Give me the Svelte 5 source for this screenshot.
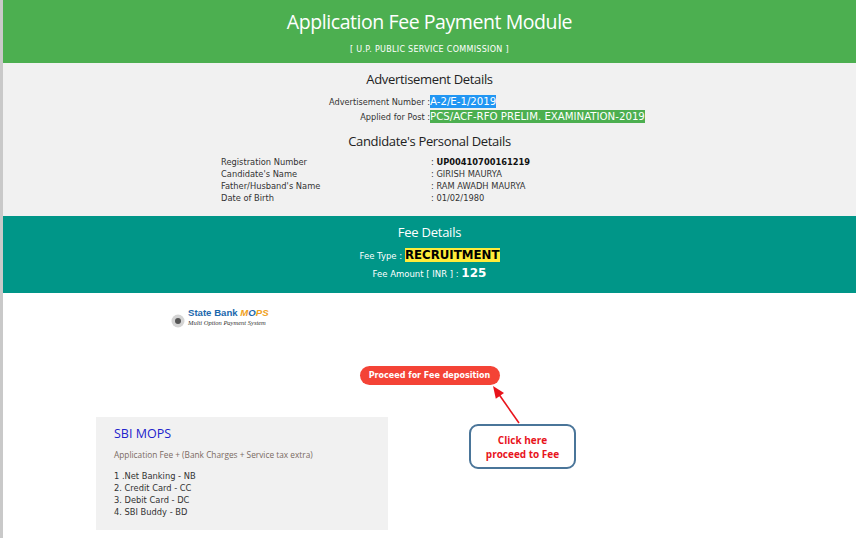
<script lang="ts">
const personal = [
  { label: "Registration Number", value: "UP00410700161219", strong: true },
  { label: "Candidate's Name", value: "GIRISH MAURYA" },
  { label: "Father/Husband's Name", value: "RAM AWADH MAURYA" },
  { label: "Date of Birth", value: "01/02/1980" },
];

const modes = ["1 .Net Banking - NB", "2. Credit Card - CC", "3. Debit Card - DC", "4. SBI Buddy - BD"];
</script>

<div class="page">
  <header class="banner">
    <h1>Application Fee Payment Module</h1>
    <p>[ U.P. PUBLIC SERVICE COMMISSION ]</p>
  </header>

  <section class="details">
    <h2>Advertisement Details</h2>
    <div class="ad-row">
      <span class="ad-label">Advertisement Number :</span><span class="ad-value blue">A-2/E-1/2019</span>
    </div>
    <div class="ad-row">
      <span class="ad-label">Applied for Post :</span><span class="ad-value green">PCS/ACF-RFO PRELIM. EXAMINATION-2019</span>
    </div>
    <h2 class="second">Candidate's Personal Details</h2>
    <div class="personal">
      {#each personal as row}
        <span>{row.label}</span>
        <span>: <b class:reg={row.strong}>{row.value}</b></span>
      {/each}
    </div>
  </section>

  <section class="fee">
    <h3>Fee Details</h3>
    <div class="fee-type">Fee Type : <mark>RECRUITMENT</mark></div>
    <div class="fee-amount">Fee Amount [ INR ] : <b>125</b></div>
  </section>

  <section class="payment">
    <div class="logo">
      <svg width="14" height="14" viewBox="0 0 14 14">
        <circle cx="7" cy="7" r="6.5" fill="#d4d4d4" />
        <circle cx="7" cy="7" r="3" fill="#555" />
      </svg>
      <div class="logo-text">
        <div class="logo-name">State Bank <em>M<i>O</i>PS</em></div>
        <div class="logo-sub">Multi Option Payment System</div>
      </div>
    </div>

    <div class="proceed-row">
      <button class="proceed">Proceed for Fee deposition</button>
    </div>

    <div class="card">
      <h4>SBI MOPS</h4>
      <p class="note">Application Fee + (Bank Charges + Service tax extra)</p>
      <ul>
        {#each modes as mode}
          <li>{mode}</li>
        {/each}
      </ul>
    </div>

    <svg class="arrow" width="36" height="44" viewBox="0 0 36 44">
      <line x1="31" y1="40" x2="10" y2="10" stroke="#e8141c" stroke-width="1.6" />
      <path d="M5 3 L16 9.9 L7.8 15.7 Z" fill="#e8141c" />
    </svg>
    <div class="callout">Click here<br />proceed to Fee</div>
  </section>
</div>

<style>
  :global(body) {
    margin: 0;
    background: #fff;
  }

  .page {
    position: relative;
    width: 856px;
    height: 538px;
    overflow: hidden;
    box-sizing: border-box;
    border-left: 3px solid #c9c9c9;
    font-family: "DejaVu Sans", Verdana, sans-serif;
    font-size: 8.3px;
    color: #333;
  }

  .banner {
    height: 63px;
    background: #4caf50;
    color: #fff;
    text-align: center;
    overflow: hidden;
  }

  h1 {
    margin: 8px 0 0;
    font: 400 19.5px/28px "Open Sans", sans-serif;
    letter-spacing: -0.43px;
  }

  .banner p {
    margin: 9px 0 0;
    font-size: 8px;
    line-height: 10px;
    letter-spacing: 0.3px;
  }

  .details {
    height: 153px;
    background: #f1f1f1;
    overflow: hidden;
  }

  h2 {
    margin: 7px 0 6px;
    text-align: center;
    font: 400 13px/18px "Open Sans", sans-serif;
    letter-spacing: -0.33px;
    color: #222;
  }

  h2.second {
    margin: 8px 0 6px;
  }

  .ad-row {
    display: flex;
    height: 15px;
    align-items: center;
  }

  .ad-label {
    width: 427px;
    text-align: right;
    font-size: 8.2px;
  }

  .ad-value {
    color: #fff;
    font-size: 10.2px;
    line-height: 13px;
  }

  .blue {
    background: #2196f3;
  }

  .green {
    background: #4caf50;
  }

  .personal {
    display: grid;
    grid-template-columns: 210px 1fr;
    padding-left: 218px;
    font-size: 8.3px;
    line-height: 12px;
  }

  .personal b {
    font-weight: 400;
  }

  .personal b.reg {
    font-weight: 700;
    color: #111;
  }

  .fee {
    height: 77px;
    background: #009688;
    color: #fff;
    text-align: center;
    overflow: hidden;
  }

  h3 {
    margin: 7px 0 6px;
    font: 400 13px/18px "Open Sans", sans-serif;
    letter-spacing: -0.25px;
  }

  .fee-type {
    line-height: 16px;
    font-size: 8.5px;
  }

  mark {
    background: #ffeb3b;
    color: #000;
    font-size: 11.8px;
    font-weight: 700;
  }

  .fee-amount {
    line-height: 18px;
    font-size: 8.5px;
  }

  .fee-amount b {
    font-size: 12px;
  }

  .payment {
    position: relative;
    height: 245px;
    background: #fff;
  }

  .logo {
    display: flex;
    align-items: flex-end;
    gap: 3px;
    padding: 15px 0 0 168px;
  }

  .logo svg {
    margin-bottom: -1px;
  }

  .logo-name {
    font: 700 9.6px/10px "Liberation Sans", sans-serif;
    color: #1b68ac;
  }

  .logo-name em {
    color: #f0a020;
  }

  .logo-name em i {
    color: #1b68ac;
  }

  .logo-sub {
    margin-top: 1px;
    font: italic 6.5px/8px "Liberation Serif", serif;
    color: #333;
  }

  .proceed-row {
    display: flex;
    justify-content: center;
    margin-top: 39px;
  }

  .proceed {
    height: 19px;
    width: 140px;
    padding: 0;
    border: 0;
    border-radius: 10px;
    background: #f44336;
    color: #fff;
    font: 700 8px "DejaVu Sans", Verdana, sans-serif;
  }

  .card {
    box-sizing: border-box;
    width: 292px;
    height: 113px;
    margin: 32px 0 0 93px;
    padding: 8px 18px;
    background: #f1f1f1;
  }

  h4 {
    margin: 0;
    font: 400 12.5px/18px "Open Sans", sans-serif;
    color: #2222cc;
  }

  .note {
    margin: 6px 0 9px;
    font: 400 8.3px/12px "Open Sans", sans-serif;
    color: #7a6a62;
  }

  ul {
    margin: 0;
    padding: 0;
    list-style: none;
    font-size: 8.3px;
    line-height: 12px;
  }

  .arrow {
    position: absolute;
    left: 485px;
    top: 90px;
  }

  .callout {
    position: absolute;
    left: 466px;
    top: 131px;
    box-sizing: border-box;
    width: 107px;
    height: 45px;
    padding-top: 7px;
    border: 2px solid #4a7599;
    border-radius: 9px;
    background: #fff;
    color: #e8141c;
    font: 700 10px/14px "Open Sans", sans-serif;
    text-align: center;
  }
</style>
